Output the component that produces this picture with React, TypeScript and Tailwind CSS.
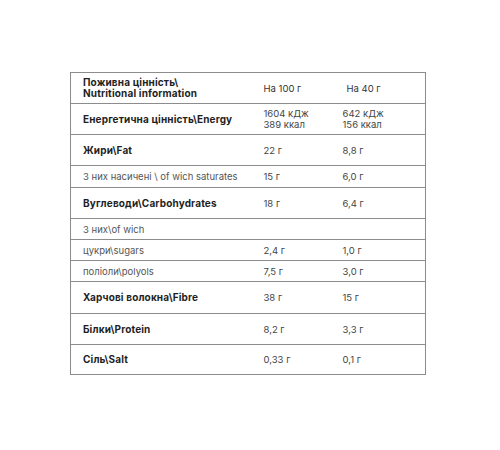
const rows: { label: string; a: string[]; b: string[]; bold?: boolean; h: string }[] = [
  { label: "Енергетична цінність\\Energy", a: ["1604 кДж", "389 ккал"], b: ["642 кДж", "156 ккал"], bold: true, h: "h-[31px]" },
  { label: "Жири\\Fat", a: ["22 г"], b: ["8,8 г"], bold: true, h: "h-[31px]" },
  { label: "З них насичені \\ of wich saturates", a: ["15 г"], b: ["6,0 г"], h: "h-[22px]" },
  { label: "Вуглеводи\\Carbohydrates", a: ["18 г"], b: ["6,4 г"], bold: true, h: "h-[31px]" },
  { label: "З них\\of wich", a: [""], b: [""], h: "h-[21px]" },
  { label: "цукри\\sugars", a: ["2,4 г"], b: ["1,0 г"], h: "h-[21px]" },
  { label: "поліоли\\polyols", a: ["7,5 г"], b: ["3,0 г"], h: "h-[21px]" },
  { label: "Харчові волокна\\Fibre", a: ["38 г"], b: ["15 г"], bold: true, h: "h-[32px]" },
  { label: "Білки\\Protein", a: ["8,2 г"], b: ["3,3 г"], bold: true, h: "h-[31px]" },
  { label: "Сіль\\Salt", a: ["0,33 г"], b: ["0,1 г"], bold: true, h: "h-[30px]" },
];

export default function App() {
  return (
    <div className="w-[500px] h-[450px] bg-white pt-[72px] pl-[70px] font-['Inter','Noto_Sans',sans-serif] text-[9.5px] leading-[11px]">
      <table className="w-[356px] border-collapse border border-[#8c8c8c]">
        <tbody>
          <tr className="h-[31px] border-b border-[#8c8c8c]">
            <td className="w-[181px] pl-[12px] font-bold text-[10px] tracking-[0.15px] text-[#1f1f1f]">
              Поживна цінність\<br />Nutritional information
            </td>
            <td className="w-[80px] pl-[12px] text-[#333]">На 100 г</td>
            <td className="pl-[15px] text-[#333]">На 40 г</td>
          </tr>
          {rows.map(r => (
            <tr key={r.label} className={`${r.h} border-b border-[#8c8c8c]`}>
              <td className={`pl-[12px] ${r.bold ? "font-bold text-[10px] tracking-[0.15px] text-[#1f1f1f]" : "text-[#555]"}`}>{r.label}</td>
              <td className="pl-[12px] text-[#444]">
                {r.a.map(v => <div key={v}>{v}</div>)}
              </td>
              <td className="pl-[11px] text-[#444]">
                {r.b.map(v => <div key={v}>{v}</div>)}
              </td>
            </tr>
          ))}
        </tbody>
      </table>
    </div>
  );
}
